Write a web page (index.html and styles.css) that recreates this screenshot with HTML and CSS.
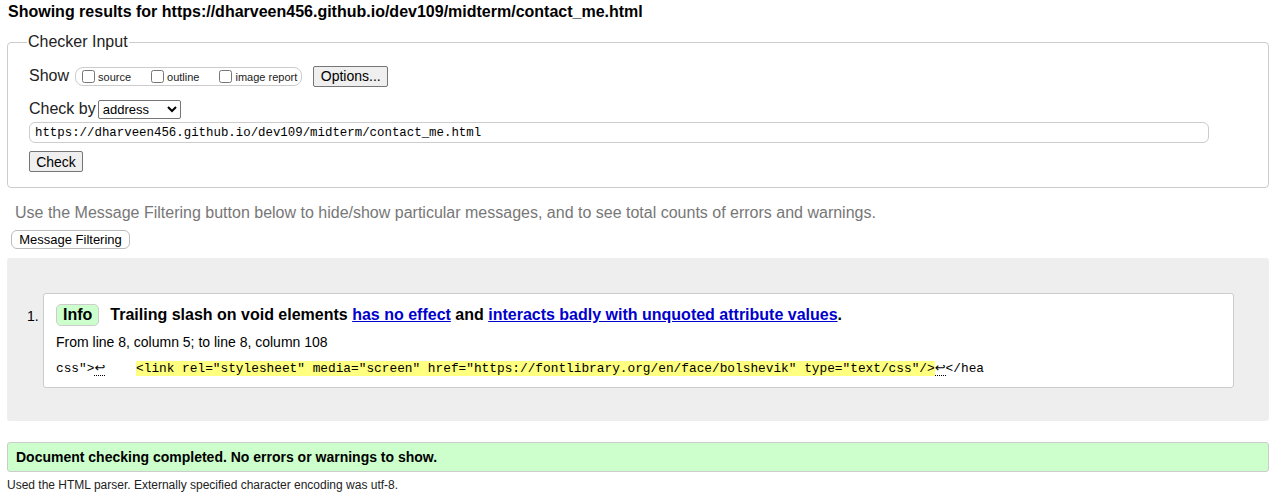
FILE: index.html
```html
<!DOCTYPE html>
<html>
<head>
<meta charset="utf-8">
<link rel="stylesheet" href="styles.css">
</head>
<body>
<h2 class="title">Showing results for https://dharveen456.github.io/dev109/midterm/contact_me.html</h2>
<fieldset class="checker">
  <legend>Checker Input</legend>
  <div class="row show-row">
    <span class="lbl">Show</span>
    <span class="opts">
      <label><input type="checkbox">source</label>
      <label><input type="checkbox">outline</label>
      <label><input type="checkbox">image report</label>
    </span>
    <button class="btn opt-btn">Options...</button>
  </div>
  <div class="row by-row">
    <span class="lbl">Check by</span>
    <select class="sel"><option>address</option></select>
  </div>
  <input class="url" type="text" value="https://dharveen456.github.io/dev109/midterm/contact_me.html">
  <div class="row"><button class="btn check-btn">Check</button></div>
</fieldset>
<p class="hint">Use the Message Filtering button below to hide/show particular messages, and to see total counts of errors and warnings.</p>
<button class="btn filter-btn">Message Filtering</button>
<div class="results">
  <ol class="msgs">
    <li class="msg">
      <p class="msg-head"><span class="badge">Info</span><span class="msg-text">Trailing slash on void elements <a href="#">has no effect</a> and <a href="#">interacts badly with unquoted attribute values</a>.</span></p>
      <p class="loc">From line 8, column 5; to line 8, column 108</p>
      <p class="extract"><code>css"&gt;<span class="lf">↩</span>    <b class="hl">&lt;link rel="stylesheet" media="screen" href="https://fontlibrary.org/en/face/bolshevik" type="text/css"/&gt;</b><span class="lf">↩</span>&lt;/hea</code></p>
    </li>
  </ol>
</div>
<p class="success">Document checking completed. No errors or warnings to show.</p>
<p class="details">Used the HTML parser. Externally specified character encoding was utf-8.</p>
</body>
</html>
```
FILE: styles.css
```css
body {
  margin: 0;
  padding: 0 7px 0 7px;
  font-family: "Liberation Sans", Arial, sans-serif;
  color: #000;
  background: #fff;
}
.title {
  font-size: 16px;
  font-weight: bold;
  margin: 0;
  padding: 3px 0 0 1px;
  line-height: 18px;
}
.checker {
  margin: 12px 0 0 0;
  border: 1px solid #ccc;
  border-radius: 4px;
  padding: 8px 21px 15px 21px;
}
.checker legend {
  font-size: 16px;
  padding: 0 1px;
  margin-left: -2px;
  color: #222;
}
.row {
  display: flex;
  align-items: center;
}
.lbl {
  font-size: 16px;
  color: #222;
  margin-right: 3px;
}
.show-row {
  margin-top: 7px;
  height: 20px;
}
.opts {
  display: flex;
  align-items: center;
  border: 1px solid #ccc;
  border-radius: 8px;
  height: 17px;
  padding: 0 4px 0 6px;
  margin-left: 3px;
  font-size: 11px;
}
.opts label {
  display: flex;
  align-items: center;
  margin-right: 20px;
  color: #222;
  padding-top: 2px;
}
.opts label:last-child { margin-right: 0; }
.opts input {
  margin: -2px 3px 0 0;
  width: 13px;
  height: 13px;
}
.btn {
  font-family: "Liberation Sans", Arial, sans-serif;
  font-size: 13px;
  background: #efefef;
  border: 1px solid #767676;
  border-radius: 2px;
  color: #000;
  padding: 0 6px;
  height: 20px;
}
.opt-btn {
  margin-left: 11px;
  width: 75px;
  height: 21px;
  font-size: 14px;
}
.by-row {
  margin-top: 13px;
  height: 20px;
}
.sel {
  font-family: "Liberation Sans", Arial, sans-serif;
  font-size: 13px;
  height: 19px;
  width: 83px;
  margin-left: -1px;
  border: 1px solid #767676;
  border-radius: 2px;
  background: #fff;
}
.url {
  display: block;
  box-sizing: border-box;
  width: 1180px;
  height: 21px;
  margin-top: 3px;
  border: 1px solid #ccc;
  border-radius: 6px;
  font-family: "Liberation Mono", "DejaVu Sans Mono", monospace;
  font-size: 12.4px;
  padding: 0 5px;
  color: #000;
}
.check-btn {
  margin-top: 8px;
  width: 54px;
  height: 21px;
  font-size: 14px;
}
.hint {
  margin: 16px 0 0 8px;
  font-size: 16px;
  color: #777;
  line-height: 18px;
}
.filter-btn {
  margin: 8px 0 0 4px;
  height: 19px;
  background: #fff;
  border: 1px solid #bbb;
  border-radius: 6px;
  font-size: 13px;
  width: 119px;
  padding: 0;
}
.results {
  margin-top: 9px;
  background: #eee;
  border-radius: 3px;
  padding: 35px 35px 33px 36px;
}
.msgs {
  margin: 0;
  padding: 0;
  list-style: none;
}
.msg {
  position: relative;
  background: #fff;
  border: 1px solid #ccc;
  border-radius: 3px;
  padding: 10px 12px 10px 12px;
}
.msg::before {
  content: "1.";
  position: absolute;
  left: -17px;
  top: 14px;
  font-size: 14px;
}
.msg p { margin: 0; }
.msg-head {
  display: flex;
  align-items: center;
  font-size: 16px;
  font-weight: bold;
}
.badge {
  background: #ccffcc;
  border: 1px solid #ccc;
  border-radius: 5px;
  padding: 0 6px;
  height: 20px;
  line-height: 20px;
  font-size: 16px;
  margin-right: 11px;
}
.msg-text a { color: #00c; }
.loc {
  font-size: 14px;
  margin-top: 8px !important;
  line-height: 16px;
}
.extract {
  margin-top: 8px !important;
  line-height: 17px;
}
.extract code {
  font-family: "Liberation Mono", "DejaVu Sans Mono", monospace;
  font-size: 12.8px;
  white-space: pre;
}
.hl {
  font-weight: normal;
  background: #ffff80;
}
.lf {
  font-family: "DejaVu Sans", sans-serif;
  border-bottom: 1px dotted #000;
  font-size: 13px;
}
.success {
  margin: 21px 0 0 0;
  background: #ccffcc;
  border: 1px solid #ccc;
  border-radius: 3px;
  padding: 6px 8px;
  font-size: 14px;
  font-weight: bold;
  line-height: 16px;
}
.details {
  margin: 6px 0 0 0;
  font-size: 12px;
  color: #222;
}
```
